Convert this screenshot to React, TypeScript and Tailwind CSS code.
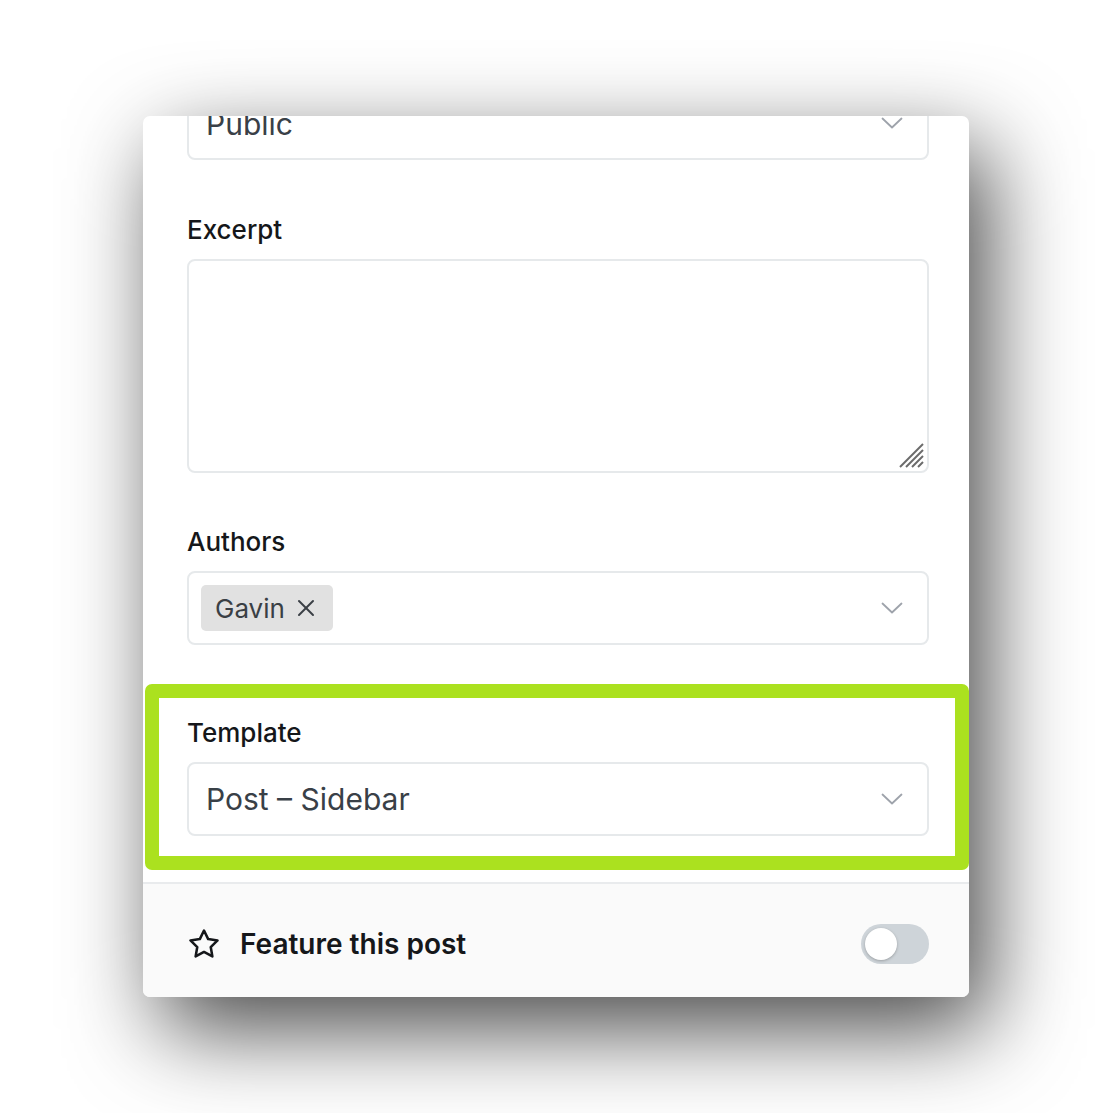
import React from "react";

const Chevron = () => (
  <svg width="22" height="12" viewBox="0 0 22 12" fill="none">
    <path d="M1.5 1.5 L11 10.5 L20.5 1.5" stroke="#9ea3ab" strokeWidth="1.8" strokeLinecap="round" strokeLinejoin="round" />
  </svg>
);

const Star = () => (
  <svg width="34" height="34" viewBox="0 0 24 24" fill="none" stroke="#15171a" strokeWidth="1.8" strokeLinecap="round" strokeLinejoin="round">
    <path d="M12 2.5l2.95 6.05 6.6.95-4.8 4.65 1.15 6.6L12 17.6l-5.9 3.15 1.15-6.6-4.8-4.65 6.6-.95z" />
  </svg>
);

export default function App() {
  return (
    <div className="min-h-[1113px] w-[1113px] bg-white pt-[116px] pl-[143px]" style={{ fontFamily: "Inter, 'Noto Sans', sans-serif" }}>
      <div className="relative w-[826px] h-[881px] rounded-[7px] bg-white shadow-[18px_32px_90px_rgba(0,0,0,0.72)]">
        <div className="h-full w-full overflow-hidden rounded-[7px] flex flex-col">
          <div className="pl-[44px] pr-[40px] flex flex-col">
            <div className="mt-[-30px] h-[74px] rounded-[8px] border-2 border-[#e6e9eb] flex items-center justify-between pl-[17px] pr-[24px] shrink-0">
              <span className="text-[30px] leading-none text-[#394047] pt-[2px]">Public</span>
              <Chevron />
            </div>
            <div className="mt-[54px] h-[30px] flex items-center text-[26px] font-medium text-[#15171a]">Excerpt</div>
            <div className="mt-[15px] relative h-[214px] rounded-[8px] border-2 border-[#e6e9eb]">
              <svg className="absolute right-[3px] bottom-[3px]" width="26" height="26" viewBox="0 0 26 26">
                <g stroke="#6b6b6b" strokeWidth="2">
                  <line x1="2" y1="25" x2="25" y2="2" />
                  <line x1="8" y1="25" x2="25" y2="8" />
                  <line x1="14" y1="25" x2="25" y2="14" />
                  <line x1="20" y1="25" x2="25" y2="20" />
                </g>
              </svg>
            </div>
            <div className="mt-[53px] h-[30px] flex items-center text-[26px] font-medium text-[#15171a]">Authors</div>
            <div className="mt-[15px] h-[74px] rounded-[8px] border-2 border-[#e6e9eb] flex items-center justify-between pl-[12px] pr-[24px]">
              <div className="h-[46px] w-[132px] rounded-[5px] bg-[#e1e1e1] flex items-center pl-[14px] gap-[12px]">
                <span className="text-[26px] text-[#3a3f45]">Gavin</span>
                <svg width="18" height="18" viewBox="0 0 18 18" stroke="#3a3f45" strokeWidth="2" strokeLinecap="round">
                  <line x1="2" y1="2" x2="16" y2="16" />
                  <line x1="16" y1="2" x2="2" y2="16" />
                </svg>
              </div>
              <Chevron />
            </div>
            <div className="mt-[72px] h-[30px] flex items-center text-[26px] font-medium text-[#15171a]">Template</div>
            <div className="mt-[15px] h-[74px] rounded-[8px] border-2 border-[#e6e9eb] flex items-center justify-between pl-[17px] pr-[24px]">
              <span className="text-[30px] text-[#394047]">Post – Sidebar</span>
              <Chevron />
            </div>
          </div>
          <div className="mt-[46px] flex-1 border-t-2 border-[#e9ebed] bg-[#fafafa] pl-[44px] pr-[40px] flex items-center justify-between pt-[6px]">
            <div className="flex items-center gap-[19px]">
              <Star />
              <span className="text-[28px] font-semibold text-[#15171a]">Feature this post</span>
            </div>
            <div className="w-[68px] h-[40px] rounded-full bg-[#ced4d9] flex items-center pl-[4px]">
              <div className="w-[32px] h-[32px] rounded-full bg-white shadow-[0_1px_3px_rgba(0,0,0,0.25)]" />
            </div>
          </div>
        </div>
        <div className="absolute left-[2px] top-[568px] w-[824px] h-[186px] rounded-[7px] border-[14px] border-[#abe11f] pointer-events-none" />
      </div>
    </div>
  );
}
